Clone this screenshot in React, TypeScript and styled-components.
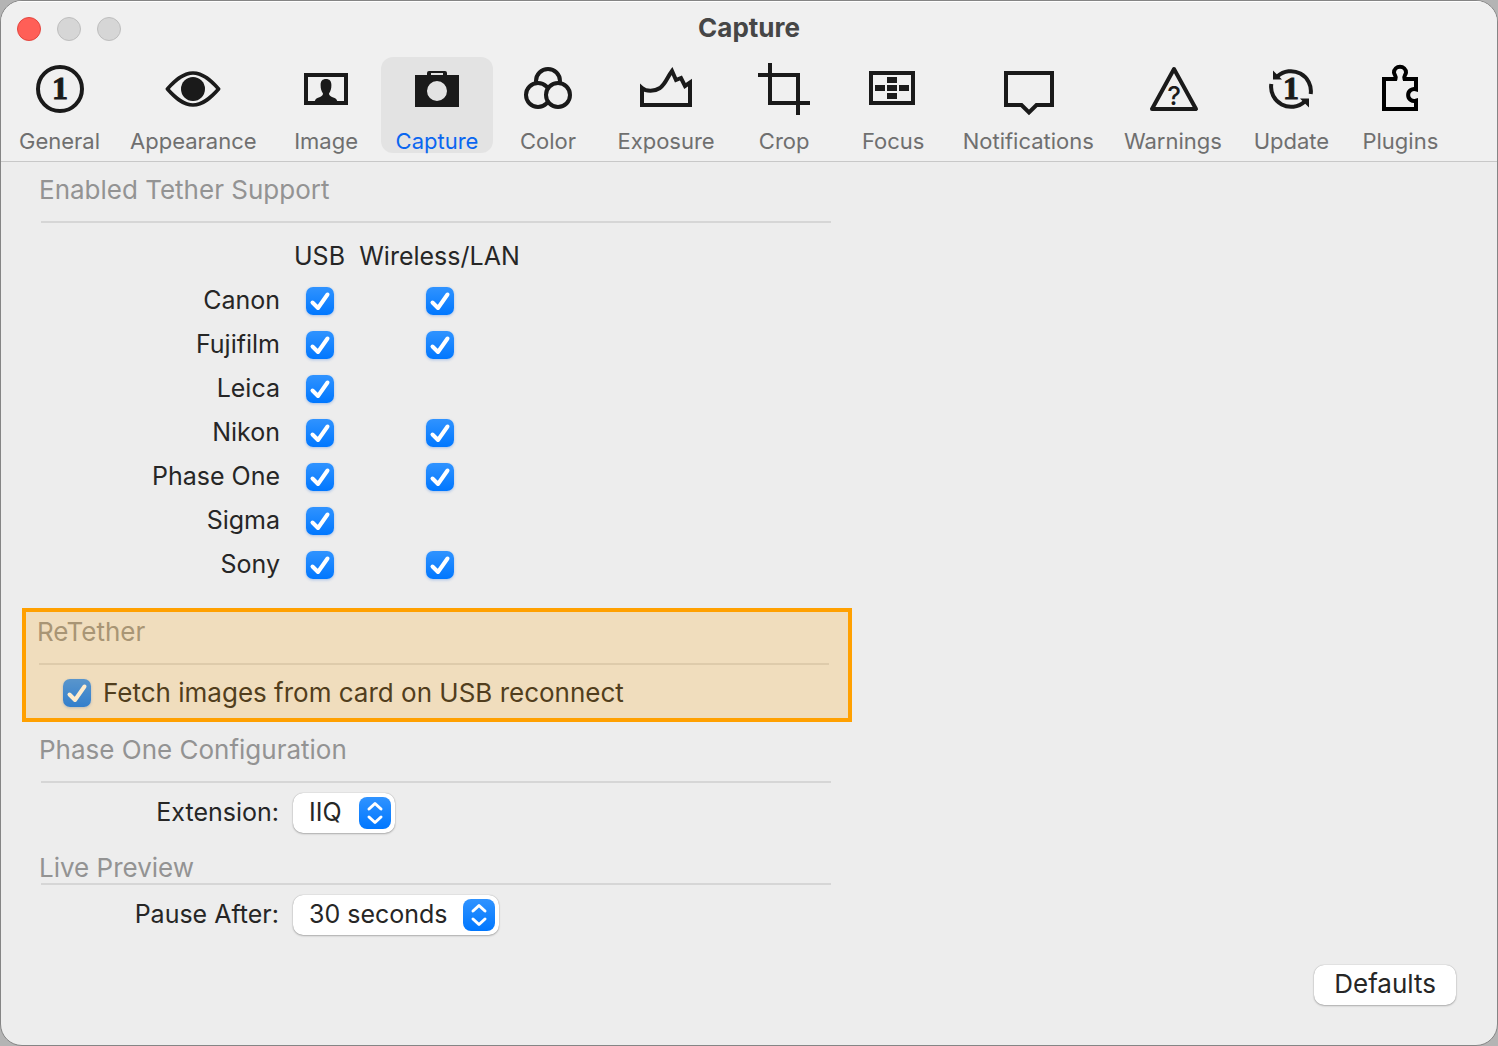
import React, { useId, useState } from "react";
import styled, { createGlobalStyle, css } from "styled-components";

const ink = "#1a1a1a";
const chrome = "#f0f0f0";
const fontStack = `Inter, "Liberation Sans", sans-serif`;

const GlobalStyle = createGlobalStyle`
  *, *::before, *::after { box-sizing: border-box; }
  body { margin: 0; background: #b4b4b4; font-family: ${fontStack}; }
  button, select, input { font: inherit; margin: 0; }
`;

const Window = styled.div`
  display: flex;
  flex-direction: column;
  min-height: 100vh;
  overflow: hidden;
  border: 1px solid #858585;
  border-radius: 22px;
  background: #ededed;
  color: #262626;
  font-size: 25px;
  line-height: 30px;
`;

const Header = styled.header`
  padding-bottom: 8px;
  border-bottom: 1px solid #c8c8c8;
  background: ${chrome};
  box-shadow: inset 0 1px 0 #ffffff;
`;

const TitleBar = styled.div`
  display: grid;
  grid-template-columns: 1fr auto 1fr;
  align-items: center;
  height: 56px;
  padding: 0 16px;
`;

const Lights = styled.div`
  display: flex;
  gap: 16px;
`;

const Light = styled.button<{ $active?: boolean }>`
  width: 24px;
  height: 24px;
  padding: 0;
  border: 1px solid ${(p) => (p.$active ? "#e2463f" : "#bdbdbd")};
  border-radius: 50%;
  background: ${(p) => (p.$active ? "#ff5f57" : "#d6d6d6")};
`;

const Title = styled.h1`
  margin: 0;
  padding-bottom: 2px;
  color: #464646;
  font-size: 26px;
  font-weight: 700;
`;

const Toolbar = styled.nav`
  display: flex;
  padding-left: 3px;
`;

const Tab = styled.button<{ $selected: boolean }>`
  display: flex;
  flex-direction: column;
  align-items: center;
  gap: 13px;
  min-width: 109px;
  height: 96px;
  padding: 4px 15px 0;
  border: 0;
  border-radius: 12px;
  background: ${(p) => (p.$selected ? "#e3e3e3" : "transparent")};
  color: ${(p) => (p.$selected ? "#0a66f0" : "#6f6f6f")};
  font-size: 22px;
  line-height: 22px;
  white-space: nowrap;
`;

const Icon = styled.svg`
  display: block;
  flex: none;
  width: 56px;
  height: 56px;
  fill: none;
  stroke: ${ink};
  stroke-width: 4;
`;

const Solid = styled.g`
  fill: ${ink};
  stroke: none;
`;

const Numeral = styled.text`
  fill: ${ink};
  stroke: ${ink};
  stroke-width: 1;
  font-family: "Liberation Serif", serif;
  font-size: 32px;
  font-weight: 700;
  text-anchor: middle;
`;

const Query = styled.text`
  fill: ${ink};
  stroke: none;
  font-family: ${fontStack};
  font-size: 26px;
  font-weight: 500;
  text-anchor: middle;
`;

const Panel = styled.main`
  display: flex;
  flex: 1;
  flex-direction: column;
  padding: 13px 0 0 21px;
`;

const Section = styled.section`
  width: 100%;
  max-width: 830px;
  padding: 0 19px 0 17px;
`;

const Highlighted = styled(Section)`
  position: relative;
  margin: 22px 0 13px;
  padding: 9px 21px 14px 15px;

  &::after {
    content: "";
    position: absolute;
    inset: 0;
    border: 4px solid #ffa000;
    background: rgba(255, 160, 0, 0.2);
    pointer-events: none;
  }
`;

const Heading = styled.h2<{ $tight?: boolean }>`
  margin: 0;
  color: #939393;
  font-size: 26px;
  font-weight: 400;

  &::after {
    content: "";
    display: block;
    height: 2px;
    margin: ${(p) => (p.$tight ? "0" : "16px")} 2px 0;
    background: #d6d6d6;
  }
`;

const Matrix = styled.table`
  width: 481px;
  margin-top: 11px;
  border-collapse: collapse;
  table-layout: fixed;

  tr { height: 44px; }
  th, td { padding: 0; font-weight: 400; white-space: nowrap; }
  td { padding-top: 2px; }
  td > * { margin: 0 auto; }
`;

const BrandColumn = styled.col`
  width: 241px;
`;

const UsbColumn = styled.col`
  width: 79px;
`;

const Brand = styled.th`
  text-align: right;
`;

const blueFace = css`
  background: linear-gradient(#3093ff, #0077ff);
`;

const Tick = styled.span`
  display: grid;
  width: 28px;
  height: 28px;

  > * { grid-area: 1 / 1; }
  svg { fill: none; stroke: #fff; stroke-width: 4; stroke-linecap: round; stroke-linejoin: round; pointer-events: none; }
  input:not(:checked) + svg { visibility: hidden; }
`;

const TickInput = styled.input`
  appearance: none;
  width: 28px;
  height: 28px;
  border-radius: 7px;
  background: #fff;
  box-shadow: 0 1px 3px rgba(0, 90, 220, 0.3);

  &:checked { ${blueFace} }
`;

const Option = styled.div`
  display: flex;
  align-items: center;
  gap: 12px;
  margin-top: 13px;
  padding-left: 26px;
  font-size: 26px;
`;

const Field = styled.div`
  display: grid;
  grid-template-columns: 240px auto;
  justify-content: start;
  align-items: center;
  column-gap: 14px;
  margin: 10px 0 20px;
`;

const FieldLabel = styled.label`
  padding-bottom: 2px;
  text-align: right;
`;

const Popup = styled.span<{ $wide?: boolean }>`
  display: grid;
  align-items: center;
  width: ${(p) => (p.$wide ? "206px" : "102px")};

  > * { grid-area: 1 / 1; }
`;

const raised = css`
  height: 40px;
  border: 0;
  border-radius: 10px;
  background: #fff;
  box-shadow: 0 0 1px rgba(0, 0, 0, 0.35), 0 1px 2px rgba(0, 0, 0, 0.25);
  color: #262626;
`;

const Select = styled.select`
  ${raised}
  appearance: none;
  width: 100%;
  padding: 0 36px 2px 16px;
`;

const Stepper = styled.span`
  ${blueFace}
  justify-self: end;
  width: 32px;
  height: 32px;
  margin-right: 4px;
  border-radius: 8px;
  pointer-events: none;

  svg { display: block; fill: none; stroke: #fff; stroke-width: 3; stroke-linecap: round; stroke-linejoin: round; }
`;

const Footer = styled.footer`
  display: flex;
  justify-content: flex-end;
  margin-top: auto;
  padding: 0 41px 40px;
`;

const PushButton = styled.button`
  ${raised}
  padding: 0 20px 2px;
  font-size: 26px;
`;

const icons: Record<string, React.ReactNode> = {
  General: (
    <>
      <circle cx="28" cy="28" r="22" />
      <Numeral x="28" y="38">1</Numeral>
    </>
  ),
  Appearance: (
    <>
      <path strokeLinejoin="round" strokeWidth="3.6" d="M2.4 28C10 19.500 18 12 28 12S46 19.500 53.600 28C46 36.500 38 44 28 44S10 36.500 2.400 28Z" />
      <Solid><circle cx="28" cy="28" r="12" /></Solid>
    </>
  ),
  Image: (
    <>
      <rect x="8" y="14" width="40" height="28" />
      <Solid>
        <path d="M28 18C31.500 18 33.400 20 33.400 24C33.400 28 32.600 30 31 32.500C31 35 33 35.500 36 36.700C38.500 37.700 39 39 39.500 41H16.500C17 39 17.500 37.700 20 36.700C23 35.500 25 35 25 32.500C23.400 30 22.600 28 22.600 24C22.600 20 24.500 18 28 18Z" />
      </Solid>
    </>
  ),
  Capture: (
    <Solid>
      <path fillRule="evenodd" d="M6 14H18V12Q18 10 20 10H36Q38 10 38 12V14H50V46H6ZM22 12V14H34V12ZM28 20A10 10 0 1 0 28 40A10 10 0 1 0 28 20Z" />
    </Solid>
  ),
  Color: (
    <g fill={chrome}>
      <circle cx="28" cy="20" r="12" />
      <circle cx="18" cy="34" r="12" />
      <circle cx="38" cy="34" r="12" />
    </g>
  ),
  Exposure: <path d="M4 44V27C8 30.500 16 31 22 27C28 22.500 29 16.500 34 10L38 19L43 17L47 25L52 21.500V44Z" />,
  Crop: <path d="M2 14H42V54M14 2V42H54" />,
  Focus: (
    <>
      <rect x="6" y="12" width="42" height="30" />
      <Solid><path d="M22 16h10v6h-10zM10 24h10v6h-10zM22 24h10v6h-10zM34 24h10v6h-10zM22 32h10v6h-10z" /></Solid>
    </>
  ),
  Notifications: <path d="M6 12H52V44H36.500L29 51.500L21.500 44H6Z" />,
  Warnings: (
    <>
      <path strokeLinejoin="round" d="M29 8L51 48H7Z" />
      <Query x="29" y="44">?</Query>
    </>
  ),
  Update: (
    <>
      <path d="M14.500 15.300A20 20 0 0 1 47.700 33M8.300 23A20 20 0 0 0 41.500 40.700" />
      <Solid><path d="M10 9.500V18.500H19ZM46 46.500V37.500H37Z" /></Solid>
      <Numeral x="28" y="38">1</Numeral>
    </>
  ),
  Plugins: (
    <path
      stroke="#000"
      d="M12 18H23.500C24.800 15 22 13.500 22 11.500A6 5.800 0 0 1 34 11.500C34 13.500 31.200 15 32.500 18H44V28.300A6 6 0 1 0 44 39.700V48H12Z"
    />
  ),
};

const brands = [
  { name: "Canon", lan: true },
  { name: "Fujifilm", lan: true },
  { name: "Leica", lan: false },
  { name: "Nikon", lan: true },
  { name: "Phase One", lan: true },
  { name: "Sigma", lan: false },
  { name: "Sony", lan: true },
];

function Checkbox({ id, label }: { id?: string; label?: string }) {
  return (
    <Tick>
      <TickInput type="checkbox" id={id} aria-label={label} defaultChecked />
      <svg width="28" height="28" viewBox="0 0 28 28" aria-hidden="true">
        <path d="M6.500 15.500L12 21L21.500 7.500" />
      </svg>
    </Tick>
  );
}

function PopupField({ label, options, wide }: { label: string; options: string[]; wide?: boolean }) {
  const id = useId();
  return (
    <Field>
      <FieldLabel htmlFor={id}>{label}</FieldLabel>
      <Popup $wide={wide}>
        <Select id={id}>
          {options.map((o) => <option key={o}>{o}</option>)}
        </Select>
        <Stepper>
          <svg width="32" height="32" viewBox="0 0 32 32" aria-hidden="true">
            <path d="M10 12L16 6.500L22 12M10 20L16 25.500L22 20" />
          </svg>
        </Stepper>
      </Popup>
    </Field>
  );
}

export default function App() {
  const [tab, setTab] = useState("Capture");
  return (
    <>
      <GlobalStyle />
      <Window>
        <Header>
          <TitleBar>
            <Lights>
              <Light $active aria-label="Close" />
              <Light aria-label="Minimize" disabled />
              <Light aria-label="Zoom" disabled />
            </Lights>
            <Title>Capture</Title>
          </TitleBar>
          <Toolbar>
            {Object.keys(icons).map((name) => (
              <Tab key={name} $selected={name === tab} onClick={() => setTab(name)}>
                <Icon viewBox="0 0 56 56" aria-hidden="true">{icons[name]}</Icon>
                {name}
              </Tab>
            ))}
          </Toolbar>
        </Header>
        <Panel>
          <Section>
            <Heading>Enabled Tether Support</Heading>
            <Matrix>
              <colgroup>
                <BrandColumn />
                <UsbColumn />
                <col />
              </colgroup>
              <thead>
                <tr>
                  <td />
                  <th scope="col">USB</th>
                  <th scope="col">Wireless/LAN</th>
                </tr>
              </thead>
              <tbody>
                {brands.map((b) => (
                  <tr key={b.name}>
                    <Brand scope="row">{b.name}</Brand>
                    <td><Checkbox label={`${b.name} USB`} /></td>
                    <td>{b.lan && <Checkbox label={`${b.name} Wireless/LAN`} />}</td>
                  </tr>
                ))}
              </tbody>
            </Matrix>
          </Section>
          <Highlighted>
            <Heading>ReTether</Heading>
            <Option>
              <Checkbox id="fetch" />
              <label htmlFor="fetch">Fetch images from card on USB reconnect</label>
            </Option>
          </Highlighted>
          <Section>
            <Heading>Phase One Configuration</Heading>
            <PopupField label="Extension:" options={["IIQ"]} />
          </Section>
          <Section>
            <Heading $tight>Live Preview</Heading>
            <PopupField label="Pause After:" options={["30 seconds"]} wide />
          </Section>
        </Panel>
        <Footer>
          <PushButton type="button">Defaults</PushButton>
        </Footer>
      </Window>
    </>
  );
}
